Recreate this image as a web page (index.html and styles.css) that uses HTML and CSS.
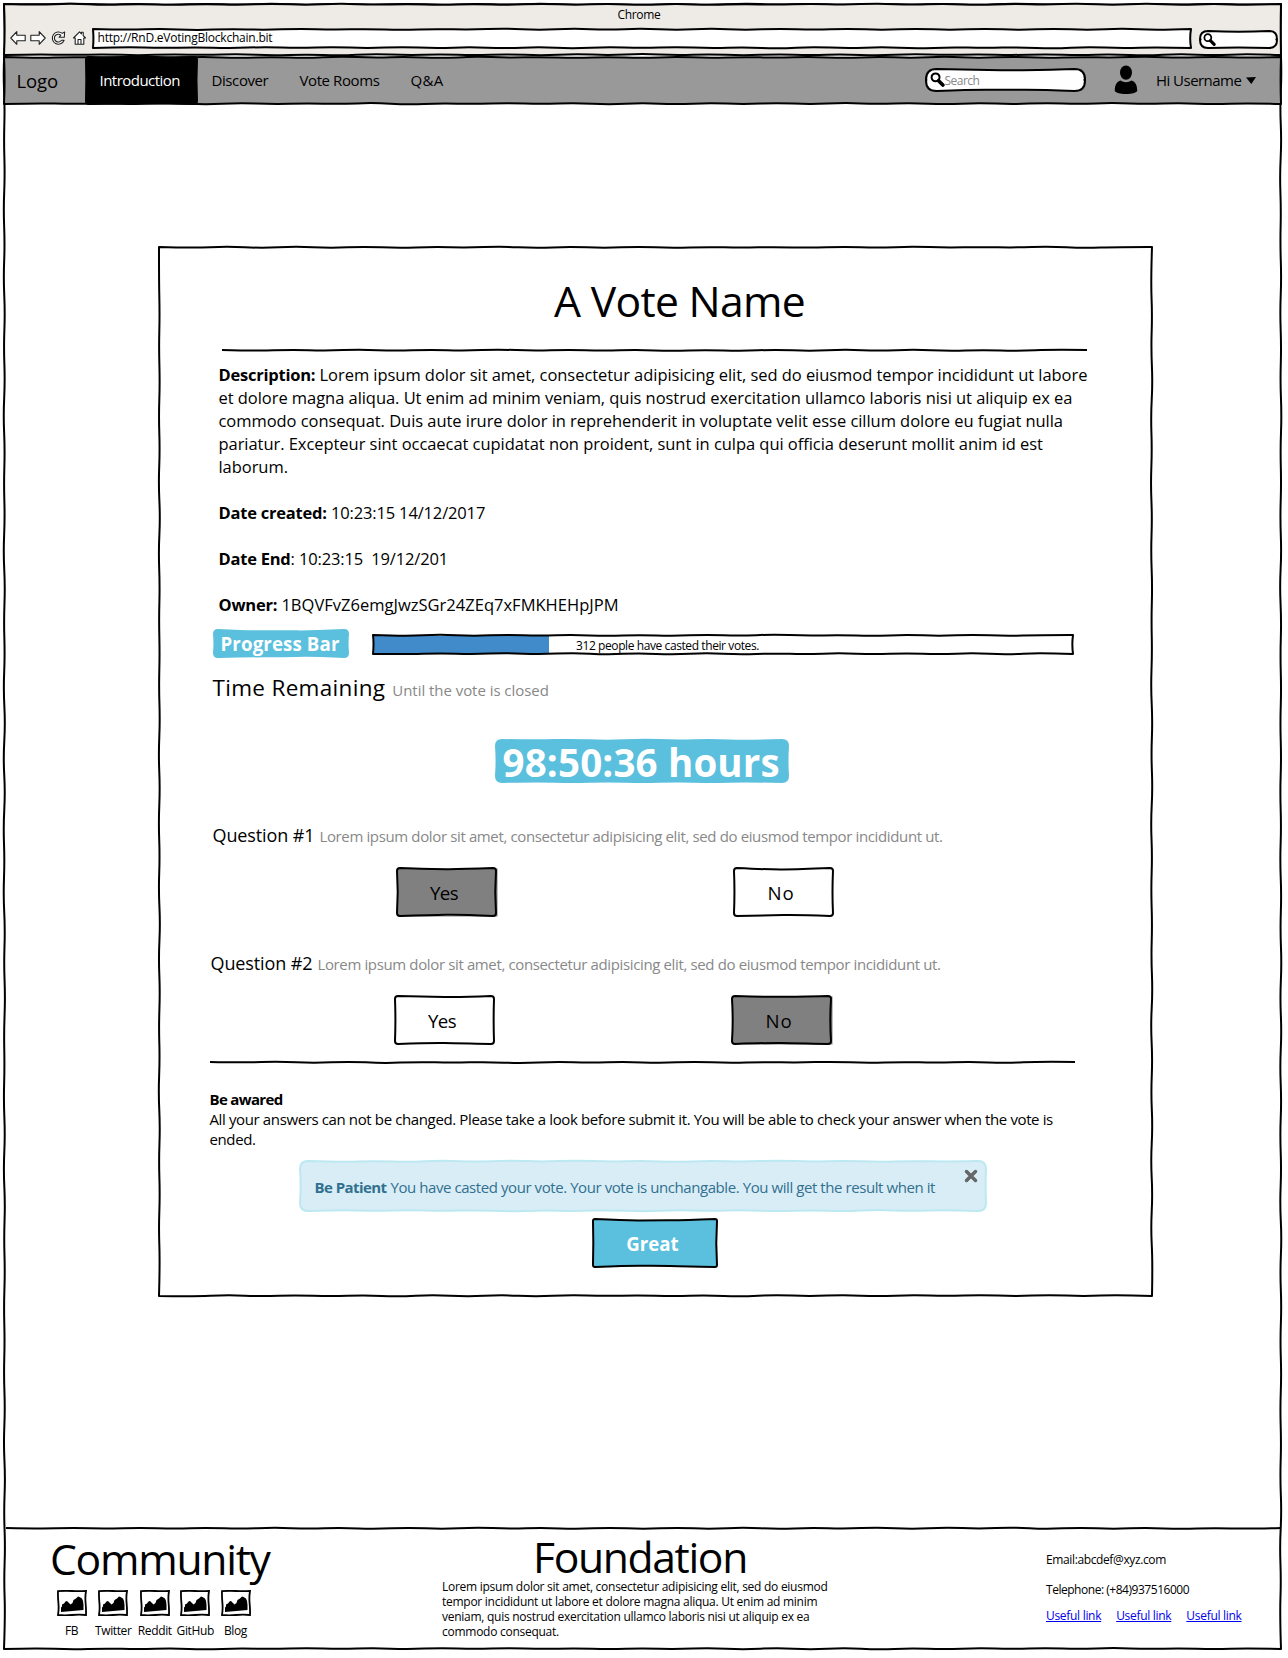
FILE: index.html
```html
<!DOCTYPE html>
<html lang="en">
<head>
<meta charset="utf-8">
<title>A Vote Name</title>
<link rel="stylesheet" href="styles.css">
</head>
<body>
<svg class="defs" aria-hidden="true">
  <symbol id="magnifier" viewBox="0 0 14 14"><circle cx="5.2" cy="5" r="3.7" fill="none" stroke="#000" stroke-width="1.9"/><path d="M8 8.2l4 4" stroke="#000" stroke-width="3.4" stroke-linecap="round"/></symbol>
  <symbol id="picture" viewBox="0 0 30 26"><path d="M1 1.200Q8 .6 15 1T29 1Q28 7 28.600 13T29 25Q22 24.400 15 25T1 25Q2 19 1.400 13T1 1.200z" fill="#fff" stroke="#000" stroke-width="1.800"/><path d="M4 22V17.500l1-1v-2l2-1 1.500-2 1.500-.5 3.500 3.500 2-1.500 1-3 2.500-1.500 2-2 1.500.5 2.500 1.500 1 2.500.5 4v5z" fill="#000"/></symbol>
</svg>
<div class="window sketch">
  <header class="chrome sketch">
    <div class="chrome-title">Chrome</div>
    <div class="chrome-bar">
      <svg class="nav-icons" width="78" height="16" viewBox="0 0 78 16" fill="#fff" stroke="#222" stroke-width="1.100" stroke-linejoin="round">
        <path d="M.8 8l6-6.300v3.600h8.400v5.400H6.800v3.600z"/>
        <path d="M35.200 8l-6-6.300v3.600h-8.400v5.400h8.400v3.600z"/>
        <path d="M52.300 3.400L54.600 2l-.3 5.300h-5.200l1.700-2.200A3.900 3.900 0 1 0 51.500 10.300h2.600A6.100 6.100 0 1 1 52.300 3.400z"/>
        <path d="M63.500 8L69.500 1.800l1.900 2V2.300h1.800v3.300L75.500 8h-1.700v6.200h-8.600V8zM68 14V9.500h3V14"/>
      </svg>
      <div class="address sketch">http://RnD.eVotingBlockchain.bit</div>
      <div class="chrome-search sketch" data-r="8"><svg width="13" height="13"><use href="#magnifier"/></svg></div>
    </div>
  </header>
  <nav class="navbar sketch">
    <span class="logo">Logo</span>
    <a class="tab-active sketch" data-r="3">Introduction</a>
    <a class="discover">Discover</a>
    <a class="rooms">Vote Rooms</a>
    <a class="qa">Q&amp;A</a>
    <div class="search sketch" data-r="10.500"><svg width="15" height="15"><use href="#magnifier"/></svg><span>Search</span></div>
    <svg class="user" width="24" height="30" viewBox="0 0 24 30"><ellipse cx="12" cy="7.600" rx="6" ry="7.200"/><path d="M.8 26c0-6 1.700-9.500 6-10.500 1.500 1.200 3 1.700 5.200 1.700s3.700-.5 5.200-1.700c4.300 1 6 4.500 6 10.500-1.500 2-5 3-11.200 3S2.300 28 .8 26z"/></svg>
    <span class="hello">Hi Username</span>
    <svg class="caret" width="10" height="7" viewBox="0 0 10 7"><path d="M0 .5L10 0 5.300 7z"/></svg>
  </nav>

  <main class="card sketch">
    <h1>A Vote Name</h1>
    <div class="rule rule-top sketch" data-line></div>
    <div class="details">
      <p><b>Description:</b> Lorem ipsum dolor sit amet, consectetur adipisicing elit, sed do eiusmod tempor incididunt ut labore</p>
      <p>et dolore magna aliqua. Ut enim ad minim veniam, quis nostrud exercitation ullamco laboris nisi ut aliquip ex ea</p>
      <p>commodo consequat. Duis aute irure dolor in reprehenderit in voluptate velit esse cillum dolore eu fugiat nulla</p>
      <p>pariatur. Excepteur sint occaecat cupidatat non proident, sunt in culpa qui officia deserunt mollit anim id est</p>
      <p>laborum.</p>
      <p class="gap"><b>Date created:</b> <span class="date">10:23:15 14/12/2017</span></p>
      <p class="gap"><b>Date End</b><span class="date">: 10:23:15 &nbsp;19/12/201</span></p>
      <p class="gap"><b>Owner:</b> <span class="owner">1BQVFvZ6emgJwzSGr24ZEq7xFMKHEHpJPM</span></p>
    </div>
    <div class="progress-row">
      <div class="badge sketch" data-r="5">Progress Bar</div>
      <div class="progress sketch"><div class="bar"></div><span class="progress-text">312 people have casted their votes.</span></div>
    </div>
    <div class="remaining"><span>Time Remaining</span><small>Until the vote is closed</small></div>
    <div class="countdown sketch" data-r="7">98:50:36 hours</div>
    <section class="question">
      <div class="ask"><span>Question #1</span><small>Lorem ipsum dolor sit amet, consectetur adipisicing elit, sed do eiusmod tempor incididunt ut.</small></div>
      <div class="choices"><button class="yes sketch chosen" data-r="3">Yes</button><button class="no sketch" data-r="3">No</button></div>
    </section>
    <section class="question second">
      <div class="ask"><span>Question #2</span><small>Lorem ipsum dolor sit amet, consectetur adipisicing elit, sed do eiusmod tempor incididunt ut.</small></div>
      <div class="choices"><button class="yes sketch" data-r="3">Yes</button><button class="no sketch chosen" data-r="3">No</button></div>
    </section>
    <div class="rule rule-bottom sketch" data-line></div>
    <div class="notice">
      <p><b>Be awared</b></p>
      <p>All your answers can not be changed. Please take a look before submit it. You will be able to check your answer when the vote is</p>
      <p>ended.</p>
    </div>
    <div class="alert sketch" data-r="8"><b>Be Patient</b><span>You have casted your vote. Your vote is unchangable. You will get the result when it</span>
      <svg class="close" width="14" height="14" viewBox="0 0 14 14"><path d="M2.500 2.500l9 9M11.500 2.500l-9 9"/></svg>
    </div>
    <button class="great sketch" data-r="2">Great</button>
  </main>

  <footer class="footer">
    <div class="rule sketch" data-line></div>
    <div class="columns">
      <section class="community">
        <h2>Community</h2>
        <div class="socials">
          <a><svg width="30" height="26"><use href="#picture"/></svg>FB</a>
          <a><svg width="30" height="26"><use href="#picture"/></svg>Twitter</a>
          <a><svg width="30" height="26"><use href="#picture"/></svg>Reddit</a>
          <a><svg width="30" height="26"><use href="#picture"/></svg>GitHub</a>
          <a><svg width="30" height="26"><use href="#picture"/></svg>Blog</a>
        </div>
      </section>
      <section class="foundation">
        <h2>Foundation</h2>
        <p>Lorem ipsum dolor sit amet, consectetur adipisicing elit, sed do eiusmod</p>
        <p>tempor incididunt ut labore et dolore magna aliqua. Ut enim ad minim</p>
        <p>veniam, quis nostrud exercitation ullamco laboris nisi ut aliquip ex ea</p>
        <p>commodo consequat.</p>
      </section>
      <section class="contact">
        <p>Email:abcdef@xyz.com</p>
        <p class="phone">Telephone: (+84)937516000</p>
        <p class="links"><a>Useful link</a><a>Useful link</a><a>Useful link</a></p>
      </section>
    </div>
  </footer>
</div>
<script src="sketch.js"></script>
</body>
</html>
```
FILE: styles.css
```css
* { box-sizing: border-box; margin: 0; padding: 0; }
body { width: 1288px; height: 1658px; padding: 4px 7px 9.500px 4px; background: #fff; color: #000; font-family: "Open Sans", "Noto Sans", sans-serif; font-size: 15px; white-space: nowrap; overflow: hidden; }
.defs { position: absolute; width: 0; height: 0; }
.sketch { position: relative; isolation: isolate; --fill: none; --line: #000; }
.outline { position: absolute; inset: 0; width: 100%; height: 100%; min-height: 2px; overflow: visible; z-index: -1; }
.outline path { fill: var(--fill); stroke: var(--line); stroke-width: 2; stroke-linejoin: round; }
.window { width: 1277px; height: 1644.500px; display: flex; flex-direction: column; }

.chrome { height: 51px; --fill: #eeebe6; font-size: 12px; }
.chrome-title { height: 25px; line-height: 22px; text-align: center; padding-right: 7px; letter-spacing: -.026em; }
.chrome-bar { display: flex; height: 19px; }
.nav-icons { margin: 1px 5px 0 5.500px; }
.address { width: 1098px; height: 19px; line-height: 18px; padding-left: 5px; letter-spacing: -.019em; --fill: #fff; }
.chrome-search { width: 77px; height: 16.500px; margin: 2px 0 0 9px; padding: 2px 3px; --fill: #fff; line-height: 0; }

.navbar { height: 46.500px; margin-top: 1.500px; display: flex; --fill: #999; line-height: 46px; letter-spacing: -.027em; }
.logo { margin-left: 12.500px; width: 69px; font-size: 18.500px; line-height: 48px; letter-spacing: -.005em; }
.tab-active { width: 111px; padding-left: 14px; color: #fff; letter-spacing: -.035em; --fill: #000; }
.discover { margin-left: 15px; width: 88px; }
.rooms { width: 111px; }
.qa { width: 515px; letter-spacing: .02em; }
.search { width: 159px; height: 21.500px; margin-top: 12px; display: flex; line-height: 20px; padding: 3px 0 0 4px; font-size: 12px; color: #888; letter-spacing: -.042em; --fill: #fff; }
.search span { line-height: 17px; }
.user { margin: 8.500px 0 0 29px; }
.hello { margin-left: 18.500px; width: 89.500px; letter-spacing: -.036em; }
.caret { margin-top: 20px; }

.card { width: 992.500px; height: 1048.500px; margin: 144px 0 0 154.500px; padding-top: 29px; display: flex; flex-direction: column; align-items: flex-start; }
h1, h2 { font-weight: 400; font-size: 42.670px; line-height: 50px; }
h1 { margin-left: 395.500px; letter-spacing: -.016em; }
h2 { letter-spacing: -.03em; }
.rule { height: 0; }
.rule-top { width: 864.500px; margin: 24px 0 0 63.500px; }
.details { margin: 13px 0 0 60px; font-size: 16.500px; line-height: 23px; letter-spacing: -.003em; }
.details b { letter-spacing: -.014em; }
.details .date { letter-spacing: -.009em; }
.details .owner { letter-spacing: .001em; }
.details .gap { margin-top: 23px; }
.progress-row { display: flex; margin: 13px 0 0 54px; }
.badge { width: 136px; height: 28.500px; padding-left: 8px; color: #fff; font-size: 18.670px; font-weight: 700; line-height: 29px; letter-spacing: .007em; --fill: #5bc0de; --line: none; }
.progress { width: 699.500px; height: 19px; margin: 5.500px 0 0 24.500px; font-size: 12px; letter-spacing: -.034em; }
.bar { position: absolute; inset: 1px auto 0 1px; width: 175px; background: #428bca; z-index: -2; }
.progress-text { display: block; margin-left: 203px; line-height: 22px; }
.remaining, .ask { display: flex; align-items: baseline; }
small { font-size: 15px; color: #888; }
.remaining { height: 30px; margin: 15px 0 0 54px; font-size: 22.500px; line-height: 30px; gap: 7px; letter-spacing: .014em; }
.remaining small { letter-spacing: -.003em; }
.countdown { width: 293.500px; height: 43.500px; margin: 36.500px 0 0 336px; padding-left: 8px; color: #fff; font-size: 38.500px; font-weight: 700; line-height: 46px; letter-spacing: .004em; --fill: #5bc0de; --line: none; }
.question { margin: 39px 0 0 54px; }
.question.second { margin: 33.500px 0 0 52px; }
.ask { height: 26px; font-size: 18px; line-height: 26px; gap: 5px; letter-spacing: -.006em; }
.ask small { letter-spacing: -.0245em; }
.choices { display: flex; gap: 238px; margin: 20px 0 0 184px; }
button { border: 0; background: none; font: inherit; color: #000; display: block; width: 99px; height: 48px; font-size: 18.670px; line-height: 49.500px; text-align: center; }
.choices button { padding-right: 4px; }
.yes { letter-spacing: -.032em; }
.no { letter-spacing: .046em; }
.chosen { --fill: #808080; box-shadow: 1.500px .5px 0 #808080; }
.rule-bottom { width: 864.500px; margin: 18px 0 0 51px; }
.question.second { margin-top: 34px; }
.notice { margin: 27px 0 0 51px; line-height: 20px; letter-spacing: -.025em; }
.notice b { letter-spacing: -.044em; }
.alert { width: 686px; height: 50px; margin: 12px 0 0 141px; padding-left: 15px; display: flex; gap: 4px; line-height: 52px; letter-spacing: -.0285em; color: #31708f; --fill: #d9edf7; --line: #bce8f1; }
.alert b { letter-spacing: -.038em; }
.close { position: absolute; right: 8px; top: 8px; stroke: #666; stroke-width: 3.500; stroke-linecap: round; }
.great { width: 124px; margin: 8.500px 0 0 434px; padding-right: 4px; color: #fff; font-weight: 700; line-height: 50px; --fill: #5bc0de; }

.footer { margin: auto 0 0 2px; height: 120.500px; width: 1275px; }
.columns { display: flex; letter-spacing: -.025em; }
.community { width: 436px; padding: 6px 0 0 43px; }
.community h2 { margin-left: 1px; }
.socials { display: grid; grid-template-columns: 41px 42.500px 40.500px 40.500px 40px; margin: 5.500px 0 0 2px; font-size: 12px; }
.socials a { display: flex; flex-direction: column; align-items: center; line-height: 18px; }
.socials svg { margin-bottom: 6px; }
.foundation { width: 604px; padding-top: 4px; font-size: 12px; line-height: 15px; letter-spacing: -.022em; }
.foundation h2 { margin: 0 0 -2px 91px; line-height: 49px; letter-spacing: -.032em; }
.contact { padding-top: 22px; font-size: 12px; line-height: 20px; }
.contact p + p { margin-top: 10px; }
.contact .phone { letter-spacing: -.039em; }
.contact p.links { margin-top: 6px; display: flex; gap: 15px; letter-spacing: -.025em; color: #00e; text-decoration: underline; }
```
FILE: sketch.js
```js
// Draws a slightly wavy, hand-drawn outline behind every .sketch element.
let seed = 7;
const rand = () => (seed = (seed * 16807) % 2147483647) / 2147483647;
const NS = 'http://www.w3.org/2000/svg';
function edge(x1, y1, x2, y2) {
  const len = Math.hypot(x2 - x1, y2 - y1);
  const n = Math.max(2, Math.round(len / 34));
  const nx = -(y2 - y1) / len, ny = (x2 - x1) / len;
  const pts = [];
  for (let i = 1; i < n; i++) {
    const o = n < 5 ? 0.6 + rand() : (i % 2 ? 1 : -1) * (0.3 + rand() * 0.7) + 0.3;
    pts.push([x1 + (x2 - x1) * i / n + nx * o, y1 + (y2 - y1) * i / n + ny * o]);
  }
  let d = '';
  pts.forEach((p, i) => {
    const q = pts[i + 1];
    const end = q ? [(p[0] + q[0]) / 2, (p[1] + q[1]) / 2] : [x2, y2];
    d += `Q${p[0].toFixed(2)} ${p[1].toFixed(2)} ${end[0].toFixed(2)} ${end[1].toFixed(2)}`;
  });
  return d;
}
document.querySelectorAll('.sketch').forEach(el => {
  const w = el.offsetWidth, h = el.offsetHeight, r = +el.dataset.r || 0;
  let d;
  if ('line' in el.dataset) d = 'M0 0' + edge(0, 0, w, 0);
  else d = `M${r} 0` + edge(r, 0, w - r, 0) + `Q${w} 0 ${w} ${r}` + edge(w, r, w, h - r) + `Q${w} ${h} ${w - r} ${h}` +
    edge(w - r, h, r, h) + `Q0 ${h} 0 ${h - r}` + edge(0, h - r, 0, r) + `Q0 0 ${r} 0Z`;
  const svg = document.createElementNS(NS, 'svg');
  svg.setAttribute('class', 'outline');
  const p = document.createElementNS(NS, 'path');
  p.setAttribute('d', d);
  svg.append(p);
  el.prepend(svg);
});
```
